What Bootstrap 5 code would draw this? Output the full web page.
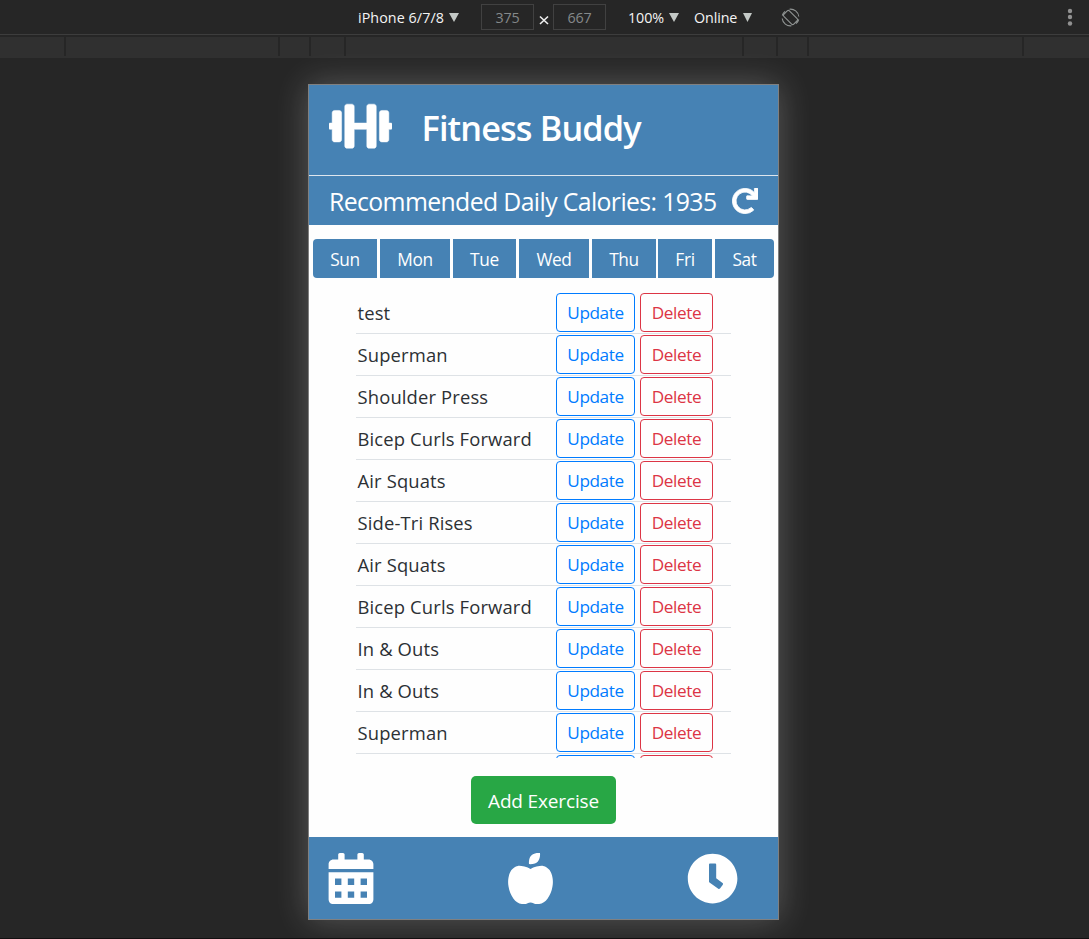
<!DOCTYPE html>
<html lang="en">
<head>
<meta charset="utf-8">
<meta name="viewport" content="width=device-width, initial-scale=1">
<title>Fitness Buddy</title>
<link href="https://cdn.jsdelivr.net/npm/bootstrap@5.3.0/dist/css/bootstrap.min.css" rel="stylesheet">
<style>
  :root { --steel: #4682b4; --shell: #262626; }
  body { height: 939px; background: var(--shell); font-family: "Open Sans", "Noto Sans", sans-serif; border-bottom: 1px solid #120f10; }
  /* emulator toolbar */
  .toolbar { height: 35px; border-bottom: 1px solid #3d3d3d; color: #f4f4f4; font-size: 14.3px; line-height: 34px; letter-spacing: -.1px; padding-left: 358px; padding-right: 16px; }
  .pick { gap: 5px; white-space: nowrap; }
  .pick span, .dim { padding-top: 1px; }
  .pick svg { fill: #c4c9c6; }
  .pick-device { width: 123px; letter-spacing: .07px; }
  .pick-zoom { width: 66px; margin-left: 22px; }
  .pick-net { width: 87px; gap: 6px; }
  .dim { width: 53px; height: 26px; line-height: 24px; border: 1px solid #414141; color: #85898a; text-align: center; }
  .times { width: 19px; height: 34px; }
  .ruler { display: grid; grid-template-columns: 66px 214px 31px 35px 398px 34px 31px 215px 1fr; height: 21px; margin-top: 2px; padding-bottom: 2px; background: #303030; }
  .ruler > i:not(:last-child) { border-right: 2px solid var(--shell); }
  /* phone screen */
  .device { width: 471px; height: 836px; margin-top: 26px; margin-left: 308px; border: 1px solid #808080; background: #fefefe; box-shadow: 0 0 32px rgba(255,255,255,.24); }
  .device svg { fill: #fff; }
  .brandbar { height: 91px; background: var(--steel); border-bottom: 1px solid #dee6ee; color: #fff; padding: 16px 19.5px; }
  .brandbar h1 { font-size: 34.3px; line-height: 54px; font-weight: 600; letter-spacing: -.88px; margin-left: 30px; }
  .calories { height: 49px; background: var(--steel); color: #fff; padding: 2px 20px 0; font-size: 24.8px; letter-spacing: -.62px; white-space: nowrap; }
  .calories svg { margin: -2px 0 0 auto; }
  .days { margin: 14px 4px 0; gap: 3px; height: 39px; }
  .days .btn { --bs-btn-color: #fff; --bs-btn-bg: var(--steel); --bs-btn-padding-x: 0; --bs-btn-padding-y: 0; --bs-btn-border-width: 0; --bs-btn-border-radius: 0; --bs-btn-font-size: 17.3px; letter-spacing: -.35px; line-height: 41px; flex-shrink: 0; }
  .days .btn:first-child { border-radius: 4px 0 0 4px; }
  .days .btn:last-child { border-radius: 0 4px 4px 0; }
  .d64 { width: 64px; } .d70 { width: 70px; } .d63 { width: 63px; } .d54 { width: 54px; } .d59 { width: 59px; }
  .days .d54 { margin-left: -1px; }
  .exercises { height: 466px; overflow: hidden; margin: 14px 47px 0; }
  .exercise { height: 42px; border-bottom: 1px solid #dee2e6; color: #2c3034; font-size: 18.4px; letter-spacing: .15px; padding: 0 18px 0 1.5px; gap: 5px; white-space: nowrap; }
  .exercise .btn { --bs-btn-padding-x: 0; --bs-btn-padding-y: 0; --bs-btn-border-radius: 4px; --bs-btn-font-size: 17.2px; height: 39px; line-height: 37px; letter-spacing: -.4px; }
  .btn-outline-primary { --bs-btn-color: #007bff; --bs-btn-border-color: #007bff; width: 79px; }
  .btn-outline-danger { --bs-btn-color: #dc3545; --bs-btn-border-color: #dc3545; width: 73px; }
  .btn-add { --bs-btn-color: #fff; --bs-btn-bg: #28a745; --bs-btn-border-radius: 5px; --bs-btn-padding-x: 0; --bs-btn-padding-y: 0; --bs-btn-font-size: 19px; width: 145px; height: 48px; margin: 18px 0 0 162px; padding-top: 2px; letter-spacing: -.15px; }
  .tabs { height: 82px; margin-top: 13px; background: var(--steel); padding: 1px 40px 0 19px; }
</style>
</head>
<body class="overflow-hidden">
<div class="toolbar d-flex align-items-center">
  <div class="pick pick-device d-flex align-items-center"><span>iPhone 6/7/8</span><svg width="10" height="9"><path d="M0 0h10L5 9z"/></svg></div>
  <div class="dim">375</div>
  <svg class="times" viewBox="0 0 19 34"><path d="M6 16.5l8 7.500M14 16.500l-8 7.500" stroke="#eee" stroke-width="1.6"/></svg>
  <div class="dim">667</div>
  <div class="pick pick-zoom d-flex align-items-center"><span>100%</span><svg width="10" height="9"><path d="M0 0h10L5 9z"/></svg></div>
  <div class="pick pick-net d-flex align-items-center"><span>Online</span><svg width="9" height="9"><path d="M0 0h9L4.500 9z"/></svg></div>
  <svg width="19" height="19" viewBox="0 0 19 19" fill="none" stroke="#919594" stroke-width="1.1"><rect x="5.600" y="2.500" width="7.800" height="14" rx="1.500" transform="rotate(-45 9.500 9.500)"/><path d="M8.500 1.200A8.300 8.300 0 0 1 17.800 8.500M10.500 17.800A8.300 8.300 0 0 1 1.200 10.500M1.300 7.500A8.300 8.300 0 0 1 4 3.300M17.700 11.500A8.300 8.300 0 0 1 15 15.700"/></svg>
  <svg class="ms-auto" width="6" height="18" fill="#919191"><circle cx="3" cy="3" r="2.200"/><circle cx="3" cy="9" r="2.200"/><circle cx="3" cy="15.500" r="2.200"/></svg>
</div>
<div class="ruler"><i></i><i></i><i></i><i></i><i></i><i></i><i></i><i></i><i></i></div>

<main class="device">
  <header class="brandbar d-flex align-items-start">
    <svg width="63" height="50.400" viewBox="0 0 640 512"><path d="M104 96H56c-13.300 0-24 10.700-24 24v104H8c-4.400 0-8 3.600-8 8v48c0 4.400 3.600 8 8 8h24v104c0 13.300 10.700 24 24 24h48c13.300 0 24-10.700 24-24V120c0-13.300-10.700-24-24-24zm528 128h-24V120c0-13.300-10.700-24-24-24h-48c-13.300 0-24 10.700-24 24v272c0 13.300 10.700 24 24 24h48c13.300 0 24-10.700 24-24V288h24c4.400 0 8-3.600 8-8v-48c0-4.400-3.600-8-8-8zM456 32h-48c-13.300 0-24 10.700-24 24v168H256V56c0-13.300-10.700-24-24-24h-48c-13.300 0-24 10.700-24 24v400c0 13.300 10.700 24 24 24h48c13.300 0 24-10.700 24-24V288h128v168c0 13.300 10.700 24 24 24h48c13.300 0 24-10.700 24-24V56c0-13.300-10.700-24-24-24z" stroke="#fff" stroke-width="5"/></svg>
    <h1 class="mb-0">Fitness Buddy</h1>
  </header>
  <div class="calories d-flex align-items-center">
    <span>Recommended Daily Calories: 1935</span>
    <svg width="26" height="26" viewBox="0 0 512 512"><path d="M500.330 0h-47.410a12 12 0 0 0-12 12.570l4 82.760A247.420 247.420 0 0 0 256 8C119.340 8 7.900 119.530 8 256.190 8.100 393.070 119.100 504 256 504a247.100 247.100 0 0 0 166.180-63.910 12 12 0 0 0 .48-17.430l-34-34a12 12 0 0 0-16.380-.55A176 176 0 1 1 402.100 157.800l-101.530-4.870a12 12 0 0 0-12.570 12v47.410a12 12 0 0 0 12 12h200.330a12 12 0 0 0 12-12V12a12 12 0 0 0-12-12z" stroke="#fff" stroke-width="16"/></svg>
  </div>
  <nav class="days d-flex">
    <button class="btn d64">Sun</button><button class="btn d70">Mon</button><button class="btn d63">Tue</button><button class="btn d70">Wed</button><button class="btn d64">Thu</button><button class="btn d54">Fri</button><button class="btn d59">Sat</button>
  </nav>
  <div class="exercises" id="exercises"></div>
  <button class="btn btn-add d-block">Add Exercise</button>
  <footer class="tabs d-flex align-items-center justify-content-between">
    <svg width="46" height="51.200" viewBox="0 0 448 512"><path fill-rule="evenodd" d="M0 464c0 26.500 21.500 48 48 48h352c26.500 0 48-21.500 48-48V192H0zM320 256h64v64h-64zM320 384h64v64h-64zM192 256h64v64h-64zM192 384h64v64h-64zM64 256h64v64H64zM64 384h64v64H64zM400 64h-48V16c0-8.800-7.200-16-16-16h-32c-8.800 0-16 7.200-16 16v48H160V16c0-8.800-7.200-16-16-16h-32c-8.800 0-16 7.200-16 16v48H48C21.500 64 0 85.500 0 112v48h448v-48c0-26.500-21.500-48-48-48z"/></svg>
    <svg width="45" height="51.200" viewBox="0 0 448 512"><path d="M350.850 129c25.970 4.670 47.270 18.670 63.920 42 14.650 20.670 24.640 46.670 29.960 78 4.670 28.670 4.320 57.330-1 86-7.990 47.330-23.970 87-47.940 119-28.640 38.670-64.590 58-107.870 58-10.660 0-22.300-3.330-34.960-10-8.660-5.330-18.310-8-28.970-8s-20.300 2.670-28.970 8c-12.660 6.670-24.300 10-34.960 10-43.280 0-79.230-19.330-107.870-58-23.970-32-39.950-71.670-47.940-119-5.320-28.670-5.670-57.330-1-86 5.320-31.330 15.310-57.330 29.960-78 16.650-23.330 37.950-37.330 63.920-42 15.980-2.670 37.950-.33 65.920 7 23.970 6.670 44.280 14.670 60.930 24 16.650-9.330 36.960-17.330 60.930-24 27.980-7.330 49.960-9.670 65.940-7zm-54.940-41c-9.320 8.670-21.650 15-36.960 19-10.660 3.330-22.300 5-34.960 5l-14.980-1c-1.330-9.330-1.330-20 0-32 2.670-24 10.320-42.330 22.970-55 9.320-8.670 21.650-15 36.960-19 10.660-3.330 22.300-5 34.960-5l14.980 1 1 15c0 12.670-1.670 24.330-4.990 35-3.990 15.330-10.310 27.670-18.980 37z"/></svg>
    <svg width="51.200" height="51.200" viewBox="0 0 512 512"><path d="M256 8C119 8 8 119 8 256s111 248 248 248 248-111 248-248S393 8 256 8zm57.100 350.100L224.900 294c-3.100-2.300-4.900-5.900-4.900-9.700V116c0-6.600 5.400-12 12-12h48c6.600 0 12 5.400 12 12v137.700l63.500 46.200c5.400 3.900 6.500 11.400 2.600 16.800l-28.200 38.800c-3.900 5.300-11.400 6.500-16.800 2.600z"/></svg>
  </footer>
</main>
<script src="https://cdn.jsdelivr.net/npm/bootstrap@5.3.0/dist/js/bootstrap.bundle.min.js"></script>
<script>
  const names = ["test", "Superman", "Shoulder Press", "Bicep Curls Forward", "Air Squats", "Side-Tri Rises", "Air Squats", "Bicep Curls Forward", "In & Outs", "In & Outs", "Superman", ""];
  const list = document.getElementById("exercises");
  for (const name of names) {
    const row = document.createElement("div");
    row.className = "exercise d-flex align-items-center";
    row.innerHTML = '<span class="me-auto"></span><button class="btn btn-outline-primary"></button><button class="btn btn-outline-danger"></button>';
    const [label, update, remove] = row.children;
    // the blank entry only peeks out at the bottom of the scroll area
    if (name) {
      label.textContent = name;
      update.textContent = "Update";
      remove.textContent = "Delete";
    }
    list.append(row);
  }
</script>
</body>
</html>
